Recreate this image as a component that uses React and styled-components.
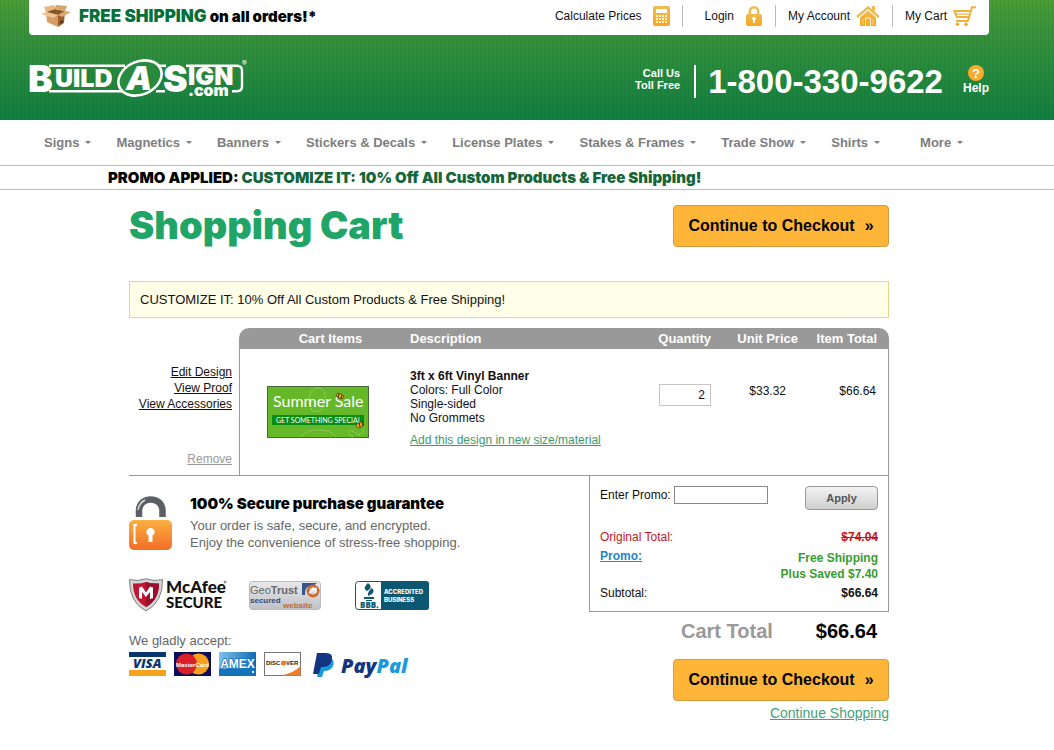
import { useState } from "react";
import styled, { createGlobalStyle } from "styled-components";

const black = `"Arial Black", Inter, "Liberation Sans", sans-serif`;

const GlobalStyle = createGlobalStyle`
  * {
    box-sizing: border-box;
  }
  body {
    margin: 0;
    background: #fff;
    color: #111;
    font: 12px/14px "Liberation Sans", Arial, sans-serif;
  }
  button,
  input {
    font-family: inherit;
  }
  svg {
    display: block;
    flex: none;
  }
`;

const Band = styled.div`
  padding-right: 36px;
`;

const Inner = styled.div`
  max-width: ${(props) => props.$max}px;
  margin: 0 auto;
`;

const Header = styled.header`
  height: 120px;
  padding-right: 36px;
  background:
    repeating-linear-gradient(90deg, rgba(0, 40, 0, 0.07) 0 1px, transparent 1px 4px),
    linear-gradient(#4a9c36, #35913a 35px, #107e41);
`;

const TopBar = styled.div`
  display: flex;
  align-items: center;
  justify-content: space-between;
  height: 35px;
  padding: 0 13px 3px 12px;
  background: #fff;
  border-radius: 0 0 4px 4px;
`;

const Shipping = styled.div`
  display: flex;
  align-items: center;
  gap: 8px;
  color: #000;
  font: 900 15px/20px ${black};
  white-space: nowrap;

  strong {
    color: #067038;
    font-size: 17px;
    font-weight: 900;
  }
`;

const Utilities = styled.nav`
  display: flex;
  align-items: center;
`;

const UtilityLink = styled.a`
  display: flex;
  align-items: center;
  gap: ${(props) => (props.$wide ? 11 : 6)}px;
  height: 22px;
  padding: 0 12px 0 ${(props) => (props.$wide ? 22 : 12)}px;
  border-right: 1px solid #bbb;
  color: #111;
  text-decoration: none;
  white-space: nowrap;

  &:last-child {
    padding-right: 0;
    border-right: 0;
  }
`;

const Masthead = styled.div`
  display: flex;
  justify-content: space-between;
  align-items: center;
  height: 85px;
`;

const Contact = styled.div`
  display: flex;
  align-items: center;
  padding-top: 8px;
  color: #fff;
  font-weight: bold;
`;

const CallUs = styled.div`
  padding: 0 14px 6px 0;
  font-size: 11px;
  line-height: 12px;
  text-align: right;
`;

const Phone = styled.div`
  padding-left: 12px;
  border-left: 2px solid #fff;
  font-size: 33px;
  line-height: 33px;
`;

const Help = styled.a`
  display: flex;
  flex-direction: column;
  align-items: center;
  margin-left: 20px;
  padding-bottom: 4px;
  color: #fff;
  font-size: 12px;
  text-decoration: none;
`;

const NavBar = styled(Band)`
  border-bottom: 1px solid #bbb;
`;

const NavList = styled.div`
  display: flex;
  align-items: center;
  gap: 25px;
  height: 45px;
  padding-left: 15px;
`;

const NavItem = styled.a`
  display: flex;
  align-items: center;
  gap: 6px;
  color: #7d7d7d;
  font-size: 13px;
  font-weight: bold;
  text-decoration: none;
  white-space: nowrap;

  &::after {
    content: "";
    border: 3px solid transparent;
    border-top-color: #7d7d7d;
    border-bottom: 0;
  }

  &:last-child {
    margin-left: 15px;
  }
`;

const PromoBar = styled(Band)`
  border-bottom: 1px solid #bbb;
  color: #000;
  font: 900 15px/23px ${black};

  span {
    color: #14663a;
  }
`;

const TitleRow = styled.div`
  display: flex;
  justify-content: space-between;
  align-items: flex-start;
  padding: 15px 0 34px;
`;

const Title = styled.h1`
  margin: 0;
  color: #20a567;
  font: 900 38px/40px ${black};
`;

const CheckoutButton = styled.button`
  display: flex;
  align-items: center;
  justify-content: center;
  gap: 10px;
  width: 216px;
  height: 42px;
  padding: 0;
  background: #ffb638;
  border: 1px solid #d39a3e;
  border-radius: 4px;
  color: #000;
  font-size: 16px;
  font-weight: bold;
`;

const Notice = styled.div`
  padding: 10px;
  background: #ffffe9;
  border: 1px solid #e3d886;
  color: #111;
  font-size: 13px;
  line-height: 15px;
`;

const Cart = styled.section`
  display: flex;
  margin-top: 10px;
  border-bottom: 1px solid #999;
`;

const Actions = styled.div`
  display: flex;
  flex-direction: column;
  align-items: flex-end;
  width: 110px;
  padding: 36px 7px 8px 0;
  line-height: 16px;
`;

const TextLink = styled.a`
  color: ${(props) => props.color || "#111"};
  font-size: ${(props) => (props.$large ? 14 : 12)}px;
`;

const RemoveLink = styled(TextLink)`
  margin-top: auto;
`;

const Items = styled.table`
  flex: 1;
  height: 147px;
  border-spacing: 0;
  table-layout: fixed;

  th {
    height: 21px;
    padding: 0;
    background: #999;
    color: #fff;
    font-size: 13px;
  }
  th:first-child {
    padding-left: 12px;
    border-top-left-radius: 10px;
  }
  th:last-child {
    border-top-right-radius: 10px;
  }
  td {
    padding: 0;
    vertical-align: top;
  }
  td:first-child {
    border-left: 1px solid #999;
  }
  td:last-child {
    border-right: 1px solid #999;
  }
`;

const Head = styled.th`
  width: ${(props) => props.$width || "auto"};
  text-align: ${(props) => props.$align || "left"};

  && {
    padding-right: ${(props) => props.$end || 0}px;
  }
`;

const Cell = styled.td`
  && {
    padding: ${(props) => props.$pad};
  }
  text-align: ${(props) => props.$align || "left"};

  p {
    margin: 0;
  }
  a {
    display: inline-block;
    margin-top: 8px;
  }
`;

const Quantity = styled.input`
  width: 52px;
  height: 22px;
  padding: 0 5px;
  border: 1px solid #c4c4c4;
  color: #111;
  font-size: 12px;
  text-align: right;
`;

const Summary = styled.div`
  display: flex;
  justify-content: space-between;
`;

const Trust = styled.div`
  color: #666;
  font-size: 13px;
  line-height: 17px;
`;

const Guarantee = styled.div`
  display: flex;
  gap: 18px;
  padding-top: 20px;

  h2 {
    margin: 0;
    padding-bottom: 6px;
    color: #000;
    font: 900 15px/15px ${black};
  }
  p {
    margin: 0;
  }
`;

const Badges = styled.div`
  display: flex;
  align-items: center;
  margin: 27px 0 20px;

  svg + svg {
    margin-left: 22px;
  }
  svg + svg + svg {
    margin-left: 34px;
  }
`;

const Cards = styled.div`
  display: flex;
  gap: 8px;
  margin-top: 3px;
`;

const Checkout = styled.div`
  display: flex;
  flex-direction: column;
  align-items: flex-end;
  width: 300px;
`;

const Totals = styled.div`
  width: 100%;
  padding: 10px 10px 7px;
  border: 1px solid #999;
  border-top: 0;
`;

const PromoForm = styled.form`
  display: flex;
  align-items: flex-start;
  padding-bottom: 19px;
  line-height: 18px;

  input {
    width: 94px;
    height: 18px;
    margin-left: 3px;
    border: 1px solid #888;
  }
  button {
    width: 73px;
    height: 24px;
    margin-left: auto;
    padding: 0;
    background: linear-gradient(#f3f3f3, #cfcfcf);
    border: 1px solid #999;
    border-radius: 4px;
    color: #555;
    font-size: 11px;
    font-weight: bold;
  }
`;

const Line = styled.div`
  display: flex;
  justify-content: space-between;
  padding-bottom: 3px;
  color: ${(props) => props.color || "#111"};
  line-height: 16px;

  strong {
    text-align: right;
  }
`;

const Savings = styled.strong`
  padding-top: 2px;
  color: #379c2d;
`;

const GrandTotal = styled.div`
  display: flex;
  gap: 43px;
  padding: 8px 12px 16px;
  color: #000;
  font-size: 20px;
  font-weight: bold;
  line-height: 23px;

  span:first-child {
    color: #999;
  }
`;

const Below = styled.div`
  padding: 4px 0 28px;
  line-height: 16px;
`;

const Amber = ({ id }) => (
  <linearGradient id={id} x1="0" y1="0" x2="0" y2="1">
    <stop offset="0" stopColor="#edbb55" />
    <stop offset="1" stopColor="#fba51a" />
  </linearGradient>
);

const BoxIcon = () => (
  <svg width="30" height="24" viewBox="0 0 30 24">
    <path d="M5 8l12 3v12L6 18z" fill="#d69c60" />
    <path d="M17 11l7-4-1 12-6 4z" fill="#9a5f2b" />
    <path d="M5 8l8-3 11 2-7 4z" fill="#8a5628" />
    <path d="M5 8L3 3l10-2 1 4z" fill="#e6b983" />
    <path d="M13 5l2-4 11 1-2 5z" fill="#d9a468" />
    <path d="M5 8l12 3-5 3L0 10z" fill="#edc696" />
    <path d="M17 11l7-4 6 1-9 5z" fill="#dba970" />
    <path d="M19 18l3-2v2l-3 2z" fill="#4f3115" />
  </svg>
);

const CalculatorIcon = () => (
  <svg width="17" height="20" viewBox="0 0 17 20">
    <defs>
      <Amber id="calc" />
    </defs>
    <rect width="17" height="20" rx="2" fill="url(#calc)" />
    <path fill="#fff" d="M3 3h11v4H3z" />
    {[9, 12, 15].map((y) =>
      [3, 6, 9, 12].map((x) => (
        <rect key={x + "-" + y} x={x} y={y} width="2" height="2" fill="#fff3d6" />
      ))
    )}
  </svg>
);

const LockIcon = () => (
  <svg width="18" height="20" viewBox="0 0 18 20">
    <defs>
      <Amber id="lock" />
    </defs>
    <path d="M4.8 9V5.500a4.200 4.200 0 0 1 8.400 0V9" fill="none" stroke="#edbb55" strokeWidth="2.600" />
    <rect x="1" y="8" width="16" height="12" rx="2" fill="url(#lock)" />
    <path d="M9 11a1.800 1.800 0 0 1 1 3.300V17H8v-2.700A1.800 1.800 0 0 1 9 11z" fill="#fff" />
  </svg>
);

const HouseIcon = () => (
  <svg width="24" height="20" viewBox="0 0 24 20">
    <defs>
      <Amber id="house" />
    </defs>
    <path d="M1 11L12 1.500 23 11" fill="none" stroke="#edbb55" strokeWidth="2.400" />
    <path d="M16 0h3v6l-3-2.500z" fill="#edbb55" />
    <path d="M4 11.500L12 4.500l8 7V20H4z" fill="url(#house)" />
    <path d="M9.500 20v-8h5v8" fill="none" stroke="#fff3d6" />
    <path d="M11 16h1M7 13v6M17 13v6" stroke="#fff3d6" strokeWidth=".5" />
  </svg>
);

const CartIcon = () => (
  <svg width="23" height="20" viewBox="0 0 23 20">
    <g fill="none" stroke="#f2b13c" strokeWidth="2">
      <path d="M23 1.200h-4L15 15H3" />
      <path d="M17.500 5H1.300L4 11h12" />
    </g>
    <path d="M3 8h13" stroke="#f2b13c" strokeWidth="1.200" />
    <circle cx="4.500" cy="18.200" r="1.700" fill="#fba51a" />
    <circle cx="13" cy="18.200" r="1.700" fill="#fba51a" />
  </svg>
);

const HelpIcon = () => (
  <svg width="16" height="16" viewBox="0 0 16 16">
    <circle cx="8" cy="8" r="8" fill="#fbab2b" />
    <text x="8" y="12.500" textAnchor="middle" fill="#fff" fontSize="13" fontWeight="bold">?</text>
  </svg>
);

const Logo = () => (
  <svg width="222" height="43" viewBox="0 0 222 43" fontFamily="Inter" fontWeight="900" fill="#fff">
    <g fill="none" stroke="#fff" strokeWidth="2.400">
      <path d="M20 9.700h76M20 35.300h74M129 9.700h8M127 35.300h9M157 9.700h51q5 0 5 5v15.500q0 5-5 5h-5" />
    </g>
    <text x="-1" y="36" fontSize="37">B</text>
    <text x="26" y="31" fontSize="25">UILD</text>
    <ellipse cx="111" cy="22" rx="22.500" ry="16.500" transform="rotate(-24 111 22)" fill="#278a3c" stroke="#fff" strokeWidth="2.600" />
    <text x="97" y="34" fontSize="33" fontStyle="italic">A</text>
    <text x="134" y="36" fontSize="37">S</text>
    <text x="159" y="29" fontSize="25">IGN</text>
    <text x="159" y="40" fontSize="16">.com</text>
    <text x="213" y="10" fontSize="7" fontWeight="400">®</text>
  </svg>
);

const BannerThumb = () => (
  <svg width="102" height="52" viewBox="0 0 102 52">
    <rect x=".5" y=".5" width="101" height="51" fill="#65b827" stroke="#476b38" />
    <g fill="none" stroke="#d5edbd" strokeWidth=".8" strokeDasharray="2 1.500" opacity=".7">
      <path d="M34 51q4-7 18-7 12 0 17 7M45 24c-6-14 0-23 7-22 9 2 7 12 3 21-2 3-7 3-10 1M86 51c-8-2-3-9 2-5 4 4 8 4 9-3" />
    </g>
    <text x="6" y="21" fill="#fff" fontFamily="Lato" fontSize="16">Summer Sale</text>
    <rect x="5" y="29" width="92" height="10" fill="#078d13" />
    <text x="9" y="37" fill="#fff" fontFamily="Lato" fontSize="7">GET SOMETHING SPECIAL</text>
    <g fill="#e8a914" stroke="#574006" strokeWidth=".7">
      <ellipse cx="73" cy="10" rx="4" ry="2.300" transform="rotate(25 73 10)" />
      <ellipse cx="93" cy="39" rx="4" ry="2.500" transform="rotate(-25 93 39)" />
    </g>
    <path d="M72 8l-1 4M75 9l-1 4M92 37l1 4M95 36l1 4" stroke="#3a2c08" />
  </svg>
);

const SecureLock = () => (
  <svg width="43" height="54" viewBox="0 0 43 54">
    <defs>
      <linearGradient id="body" x1="0" y1="0" x2="0" y2="1">
        <stop offset="0" stopColor="#fcb042" />
        <stop offset="1" stopColor="#f26d26" />
      </linearGradient>
    </defs>
    <path d="M10 21v-6C10-.5 33.500-.5 33.500 15v6" fill="none" stroke="#5d5f66" strokeWidth="6.500" />
    <path d="M9 14q1-7 7-10" fill="none" stroke="#d7d8da" strokeWidth="1.500" />
    <rect y="24" width="43" height="30" rx="5" fill="url(#body)" />
    <path d="M8 29H5.500v18H8" fill="none" stroke="#fff" strokeWidth="2" />
    <path d="M21.500 32a4 4 0 0 1 2 7.500V46h-4v-6.500a4 4 0 0 1 2-7.500z" fill="#fff" />
  </svg>
);

const McAfee = () => (
  <svg width="98" height="34" viewBox="0 0 98 34">
    <path d="M17 .8q8 3 16.500.8Q34 24 17 33 0 24 .5 1.600 9 3.800 17 .8z" fill="#d5d6d8" stroke="#7c7e82" />
    <path d="M17 4q6 2 13 1.500Q30 22 17 29 4 22 4 5.500 11 6 17 4z" fill="#c11433" />
    <path d="M17 4q6 2 13 1.500Q30 22 17 29z" fill="#99102c" />
    <path d="M10 20V9.500l3-1 4 6 4-6 3 1V20l-3 1v-7l-4 5-4-5v7z" fill="#fff" />
    <g fill="#111" fontFamily="Lato" fontWeight="900">
      <text x="37" y="15" fontSize="17">McAfee</text>
      <text x="37" y="30" fontSize="15">SECURE</text>
    </g>
    <circle cx="96" cy="4" r="1" fill="none" stroke="#444" strokeWidth=".7" />
  </svg>
);

const GeoTrust = () => (
  <svg width="72" height="29" viewBox="0 0 72 29">
    <defs>
      <linearGradient id="geo" x1="0" y1="0" x2="0" y2="1">
        <stop offset="0" stopColor="#e9e9eb" />
        <stop offset="1" stopColor="#bfc1c5" />
      </linearGradient>
    </defs>
    <rect x=".5" y=".5" width="71" height="28" rx="3" fill="url(#geo)" stroke="#b9bbc0" />
    <path d="M53 2h15l-4 3q-9-1-8 9h-3z" fill="#33568f" />
    <circle cx="64" cy="10" r="5" fill="none" stroke="#d0692c" strokeWidth="3" />
    <path d="M60 12l6-4M63 7.500h4v4" fill="none" stroke="#fff" strokeWidth="1.500" />
    <g fontFamily="Liberation Sans">
      <text x="1" y="13" fontSize="11" fill="#66676b">Geo<tspan fontWeight="bold">Trust</tspan></text>
      <text x="1" y="22" fontSize="8" fontWeight="bold" fill="#274a83">secured</text>
      <text x="34" y="27" fontSize="8" fontWeight="bold" fill="#bd6a35">website</text>
    </g>
  </svg>
);

const Bbb = () => (
  <svg width="74" height="29" viewBox="0 0 74 29" fontFamily="Open Sans" fontWeight="800">
    <rect x=".5" y=".5" width="73" height="28" rx="3" fill="#fff" stroke="#0c5872" />
    <path d="M26 0h45a3 3 0 0 1 3 3v23a3 3 0 0 1-3 3H26z" fill="#0c5872" />
    <path d="M13 2q4 3 2 6l-3 2q-5-3 1-8zM17 7q3 3 0 6l-4 2q-1-4 4-8zM9 16h10v2H9zM11 19h6v1h-6z" fill="#0c5872" />
    <text x="5" y="27" fontSize="8" fill="#0c5872">BBB.</text>
    <g fill="#fff" fontFamily="Inter" fontSize="6">
      <text x="29" y="13">ACCREDITED</text>
      <text x="29" y="21">BUSINESS</text>
    </g>
  </svg>
);

const Visa = () => (
  <svg width="37" height="24" viewBox="0 0 37 24">
    <path fill="#fff" d="M0 0h37v24H0z" />
    <path fill="#08366f" d="M0 0h37v5H0z" />
    <path fill="#f5a31c" d="M0 18h37v6H0z" />
    <text x="4" y="16" fontFamily="Open Sans" fontSize="13" fontWeight="800" fontStyle="italic" fill="#08366f">VISA</text>
  </svg>
);

const MasterCard = () => (
  <svg width="37" height="24" viewBox="0 0 37 24">
    <path fill="#0c0d5c" d="M0 0h37v24H0z" />
    <circle cx="24.500" cy="12" r="10.500" fill="#f5a11d" />
    <circle cx="12.500" cy="12" r="10.500" fill="#d91f27" />
    <text x="18.500" y="14.500" textAnchor="middle" fontFamily="Liberation Sans" fontSize="6" fontWeight="bold" fill="#fff">MasterCard</text>
  </svg>
);

const Amex = () => (
  <svg width="37" height="24" viewBox="0 0 37 24">
    <defs>
      <linearGradient id="amex">
        <stop offset="0" stopColor="#7fc2ea" />
        <stop offset="1" stopColor="#0f6cb5" />
      </linearGradient>
    </defs>
    <path fill="url(#amex)" d="M0 0h37v24H0z" />
    <path fill="#1474bb" d="M0 17h37v7H0z" />
    <text x="18.500" y="15.500" textAnchor="middle" fontFamily="Liberation Sans" fontSize="12" fontWeight="bold" fill="#fff" stroke="#1474bb" strokeWidth="1.500" paintOrder="stroke">AMEX</text>
    <path fill="#fff" d="M33 19h2v2h-2z" />
  </svg>
);

const Discover = () => (
  <svg width="37" height="24" viewBox="0 0 37 24">
    <rect x=".5" y=".5" width="36" height="23" fill="#fff" stroke="#777" />
    <path d="M17 23.500Q30 21 36.500 14v9.500z" fill="#ef7d2b" />
    <circle cx="19.500" cy="11" r="2.600" fill="#ef7d2b" />
    <g fontFamily="Liberation Sans" fontSize="6" fontWeight="bold" fill="#222">
      <text x="2" y="13">DISC</text>
      <text x="22" y="13">VER</text>
    </g>
  </svg>
);

const PayPal = () => (
  <svg width="106" height="28" viewBox="-3 0 106 28">
    <path d="M8 6h11q4 3 2 8-2 5-9 5l-2 6H5z" fill="#1a9bdc" />
    <path d="M5 1h9q7 0 6 6-1 8-9 8H9l-2 7H1z" fill="#123682" />
    <text x="29" y="21" fontFamily="Open Sans" fontSize="20" fontWeight="800" fontStyle="italic" fill="#123682">
      Pay<tspan fill="#1a9bdc">Pal</tspan>
    </text>
  </svg>
);

const menu = [
  "Signs",
  "Magnetics",
  "Banners",
  "Stickers & Decals",
  "License Plates",
  "Stakes & Frames",
  "Trade Show",
  "Shirts",
  "More",
];

const promoText = "CUSTOMIZE IT: 10% Off All Custom Products & Free Shipping!";

const CheckoutAction = () => (
  <CheckoutButton type="button">
    <span>Continue to Checkout</span>
    <span>»</span>
  </CheckoutButton>
);

const SiteHeader = () => (
  <Header>
    <Inner $max={960}>
      <TopBar>
        <Shipping>
          <BoxIcon />
          <span>
            <strong>FREE SHIPPING</strong> on all orders!*
          </span>
        </Shipping>
        <Utilities>
          <UtilityLink href="#prices" $wide>
            Calculate Prices <CalculatorIcon />
          </UtilityLink>
          <UtilityLink href="#login" $wide>
            Login <LockIcon />
          </UtilityLink>
          <UtilityLink href="#account">
            My Account <HouseIcon />
          </UtilityLink>
          <UtilityLink href="#cart">
            My Cart <CartIcon />
          </UtilityLink>
        </Utilities>
      </TopBar>
      <Masthead>
        <Logo />
        <Contact>
          <CallUs>
            Call Us
            <br />
            Toll Free
          </CallUs>
          <Phone>1-800-330-9622</Phone>
          <Help href="#help">
            <HelpIcon />
            Help
          </Help>
        </Contact>
      </Masthead>
    </Inner>
  </Header>
);

const App = () => {
  let [quantity, setQuantity] = useState("2");
  let [promo, setPromo] = useState("");

  return (
    <>
      <GlobalStyle />
      <SiteHeader />
      <NavBar>
        <Inner $max={960} as="nav">
          <NavList>
            {menu.map((name) => (
              <NavItem key={name} href="#menu">
                {name}
              </NavItem>
            ))}
          </NavList>
        </Inner>
      </NavBar>
      <PromoBar>
        <Inner $max={802}>
          PROMO APPLIED: <span>{promoText}</span>
        </Inner>
      </PromoBar>
      <Band as="main">
        <Inner $max={760}>
          <TitleRow>
            <Title>Shopping Cart</Title>
            <CheckoutAction />
          </TitleRow>
          <Notice>{promoText}</Notice>
          <Cart>
            <Actions>
              <TextLink href="#edit">Edit Design</TextLink>
              <TextLink href="#proof">View Proof</TextLink>
              <TextLink href="#accessories">View Accessories</TextLink>
              <RemoveLink href="#remove" color="#999">
                Remove
              </RemoveLink>
            </Actions>
            <Items>
              <thead>
                <tr>
                  <Head $width="171px" $align="center">Cart Items</Head>
                  <Head>Description</Head>
                  <Head $width="70px" $align="right">Quantity</Head>
                  <Head $width="100px" $align="right" $end={13}>Unit Price</Head>
                  <Head $width="78px" $align="right" $end={12}>Item Total</Head>
                </tr>
              </thead>
              <tbody>
                <tr>
                  <Cell $pad="37px 0 0 27px">
                    <BannerThumb />
                  </Cell>
                  <Cell $pad="20px 0 0">
                    <strong>3ft x 6ft Vinyl Banner</strong>
                    <p>Colors: Full Color</p>
                    <p>Single-sided</p>
                    <p>No Grommets</p>
                    <TextLink href="#resize" color="#3d9a6b">
                      Add this design in new size/material
                    </TextLink>
                  </Cell>
                  <Cell $pad="35px 0 0" $align="right">
                    <Quantity
                      aria-label="Quantity"
                      value={quantity}
                      onChange={(e) => setQuantity(e.target.value)}
                    />
                  </Cell>
                  <Cell $pad="35px 25px 0 0" $align="right">$33.32</Cell>
                  <Cell $pad="35px 12px 0 0" $align="right">$66.64</Cell>
                </tr>
              </tbody>
            </Items>
          </Cart>
          <Summary>
            <Trust>
              <Guarantee>
                <SecureLock />
                <div>
                  <h2>100% Secure purchase guarantee</h2>
                  <p>Your order is safe, secure, and encrypted.</p>
                  <p>Enjoy the convenience of stress-free shopping.</p>
                </div>
              </Guarantee>
              <Badges>
                <McAfee />
                <GeoTrust />
                <Bbb />
              </Badges>
              We gladly accept:
              <Cards>
                <Visa />
                <MasterCard />
                <Amex />
                <Discover />
                <PayPal />
              </Cards>
            </Trust>
            <Checkout>
              <Totals>
                <PromoForm onSubmit={(e) => e.preventDefault()}>
                  <label htmlFor="promo">Enter Promo:</label>
                  <input
                    id="promo"
                    type="text"
                    value={promo}
                    onChange={(e) => setPromo(e.target.value)}
                  />
                  <button type="submit">Apply</button>
                </PromoForm>
                <Line color="#c4161c">
                  Original Total:
                  <strong>
                    <s>$74.04</s>
                  </strong>
                </Line>
                <Line>
                  <TextLink href="#promo" color="#2285c7">
                    <b>Promo:</b>
                  </TextLink>
                  <Savings>
                    Free Shipping
                    <br />
                    Plus Saved $7.40
                  </Savings>
                </Line>
                <Line>
                  Subtotal: <strong>$66.64</strong>
                </Line>
              </Totals>
              <GrandTotal>
                <span>Cart Total</span>
                <span>$66.64</span>
              </GrandTotal>
              <CheckoutAction />
              <Below>
                <TextLink href="#shop" color="#45a276" $large>
                  Continue Shopping
                </TextLink>
              </Below>
            </Checkout>
          </Summary>
        </Inner>
      </Band>
    </>
  );
};

export default App;
